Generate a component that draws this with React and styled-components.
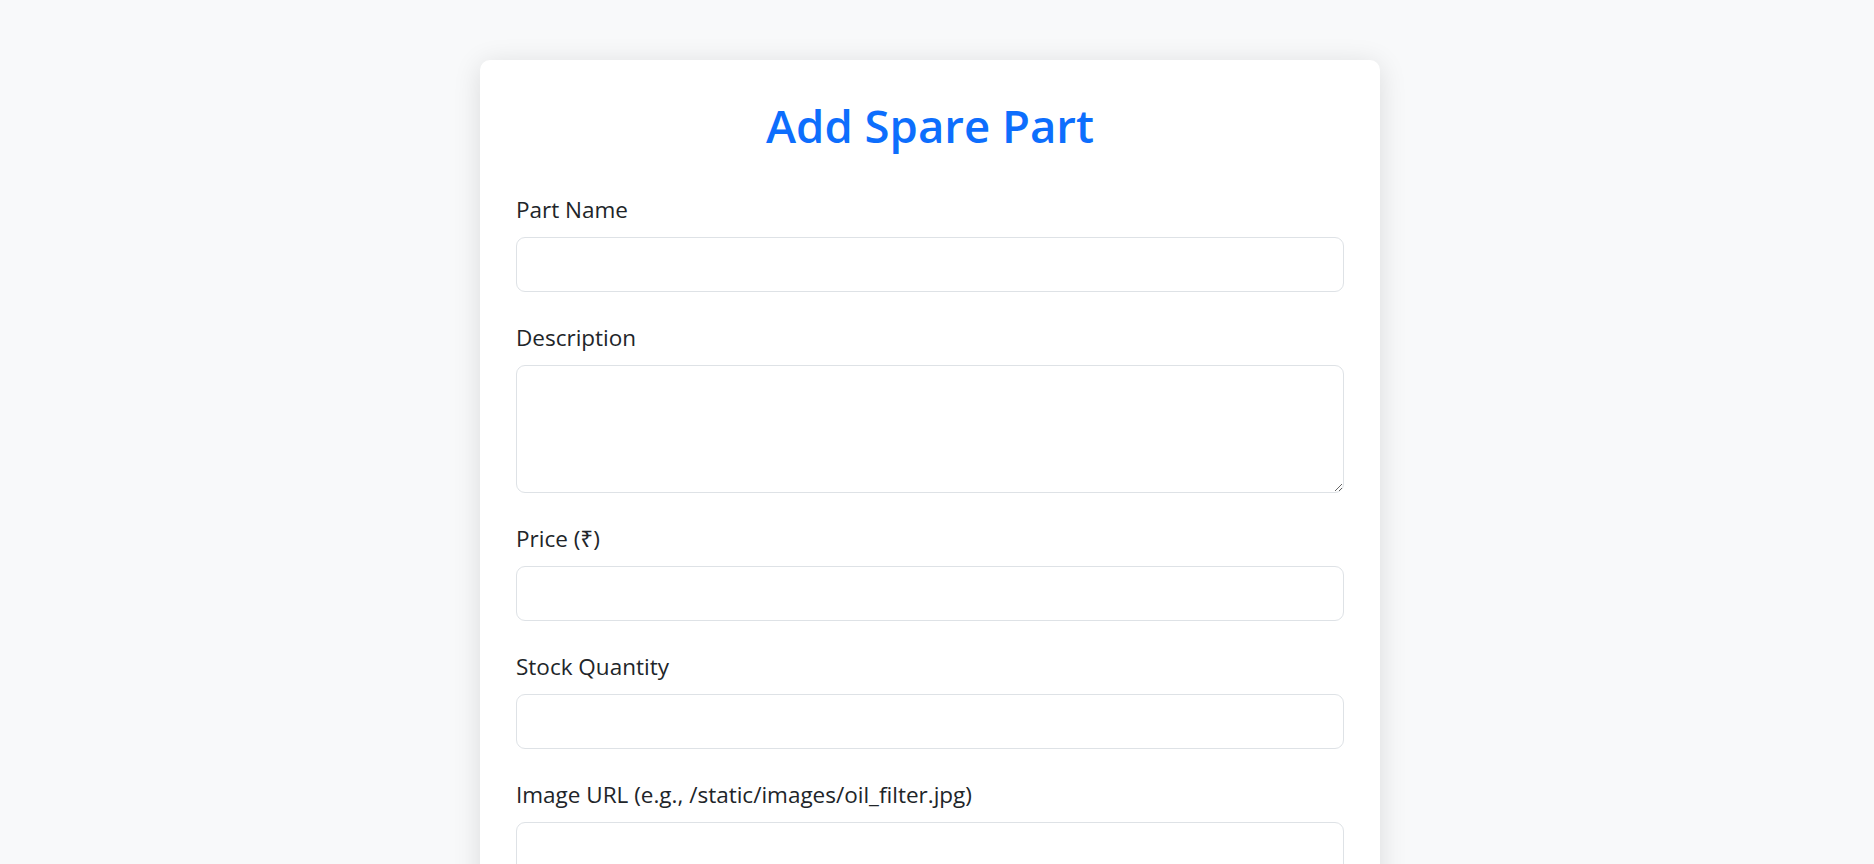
import styled, { createGlobalStyle } from "styled-components";

const GlobalStyle = createGlobalStyle`
    * {
        box-sizing: border-box;
    }
    body {
        margin: 0;
        background-color: #F8F9FA;
        font-family: "Open Sans", "Noto Sans", sans-serif;
        color: #212529;
    }
`

const fields = [
    { id: "name", label: "Part Name", type: "text" },
    { id: "description", label: "Description", multiline: true },
    { id: "price", label: "Price (₹)", type: "number" },
    { id: "stock", label: "Stock Quantity", type: "number" },
    { id: "image", label: "Image URL (e.g., /static/images/oil_filter.jpg)", type: "text" },
];

export default function App() {
    return (
        <>
            <GlobalStyle />
            <Page>
                <Card>
                    <Title>Add Spare Part</Title>
                    <form onSubmit={e => e.preventDefault()}>
                        {fields.map(field =>
                            <Group key={field.id}>
                                <Label htmlFor={field.id}>{field.label}</Label>
                                {field.multiline
                                    ? <TextArea id={field.id} rows={3} />
                                    : <Input id={field.id} type={field.type} />}
                            </Group>
                        )}
                        <SubmitButton type="submit">Add Part</SubmitButton>
                    </form>
                </Card>
            </Page>
        </>
    )
}

const Page = styled.main`
    display: flex;
    justify-content: center;
    padding: 60px 14px 60px 0;
`

const Card = styled.section`
    width: 900px;
    background-color: #FFFFFF;
    border-radius: 10px;
    box-shadow: 0 4px 28px rgba(0, 0, 0, 0.12);
    padding: 38px 36px 36px;
`

const Title = styled.h2`
    margin: 0 0 39px;
    text-align: center;
    font-size: 45.5px;
    font-weight: 600;
    line-height: 1.2;
    color: #0D6EFD;
`

const Group = styled.div`
    margin-bottom: 28px;
`

const Label = styled.label`
    display: block;
    font-size: 22.5px;
    line-height: 36px;
    margin-bottom: 9px;
`

const fieldBase = `
    display: block;
    width: 100%;
    border: 1.5px solid #DEE2E6;
    border-radius: 9px;
    background-color: #FFFFFF;
    font-family: inherit;
    font-size: 22px;
    color: #212529;
    padding: 9px 18px;
    outline: 0;
`

const Input = styled.input`
    ${fieldBase}
    height: 55px;
`

const TextArea = styled.textarea`
    ${fieldBase}
    height: 128px;
    resize: vertical;
`

const SubmitButton = styled.button`
    width: 100%;
    height: 57px;
    border: 0;
    border-radius: 9px;
    background-color: #0D6EFD;
    color: #FFFFFF;
    font-family: inherit;
    font-size: 22px;
    cursor: pointer;
`
